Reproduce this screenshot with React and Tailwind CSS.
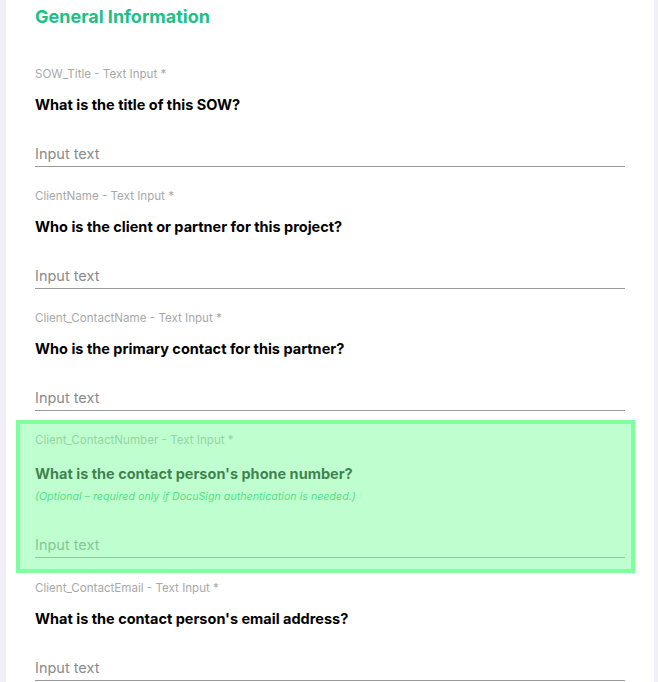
import React from "react";

const fields = [
  { label: "SOW_Title - Text Input *", question: "What is the title of this SOW?" },
  { label: "ClientName - Text Input *", question: "Who is the client or partner for this project?" },
  { label: "Client_ContactName - Text Input *", question: "Who is the primary contact for this partner?" },
  {
    label: "Client_ContactNumber - Text Input *",
    question: "What is the contact person's phone number?",
    helper: "(Optional – required only if DocuSign authentication is needed.)",
    selected: true,
  },
  { label: "Client_ContactEmail - Text Input *", question: "What is the contact person's email address?" },
];

const Field = ({ label, question, helper, selected }) => {
  return (
    <div className={`relative pt-[10px] ${selected ? "pb-[12px]" : "pb-[11px]"}`}>
      <p className="text-[11.6px] leading-[16px] text-[#a8a8a8]">{label}</p>
      <h3 className={`${helper ? "mt-[16px]" : "mt-[13px]"} text-[14.5px] leading-[20px] font-bold text-black`}>
        {question}
      </h3>
      {helper && (
        <p className="mt-[5px] text-[10.7px] leading-[16px] italic text-[#1fbf6a]">{helper}</p>
      )}
      <input
        type="text"
        placeholder="Input text"
        className={`w-full h-[28px] ${helper ? "mt-[25px]" : "mt-[24px]"} pt-[2px] text-[14.5px] text-black placeholder-[#8a8a8a] bg-transparent border-b-[1.5px] border-[#999999] outline-none`}
      />
      {/* selection overlay */}
      {selected && (
        <div className="absolute -left-[19px] -right-[10px] -top-[2px] -bottom-[3px] bg-[#80ff9f]/50 border-4 border-[#80ff9f] pointer-events-none" />
      )}
    </div>
  );
};

export default function App() {
  return (
    <div
      className="min-h-screen bg-[#f0f0f6] px-[6px]"
      style={{ fontFamily: "Inter, 'Noto Sans', sans-serif" }}
    >
      <div className="bg-white w-[648px] min-h-[682px] px-[29px] pt-[3px]">
        <h2 className="text-[18px] leading-[28px] font-bold text-[#20bf86]">General Information</h2>
        <div className="mt-[25px] flex flex-col">
          {fields.map((f) => (
            <Field key={f.label} {...f} />
          ))}
        </div>
      </div>
    </div>
  );
}
